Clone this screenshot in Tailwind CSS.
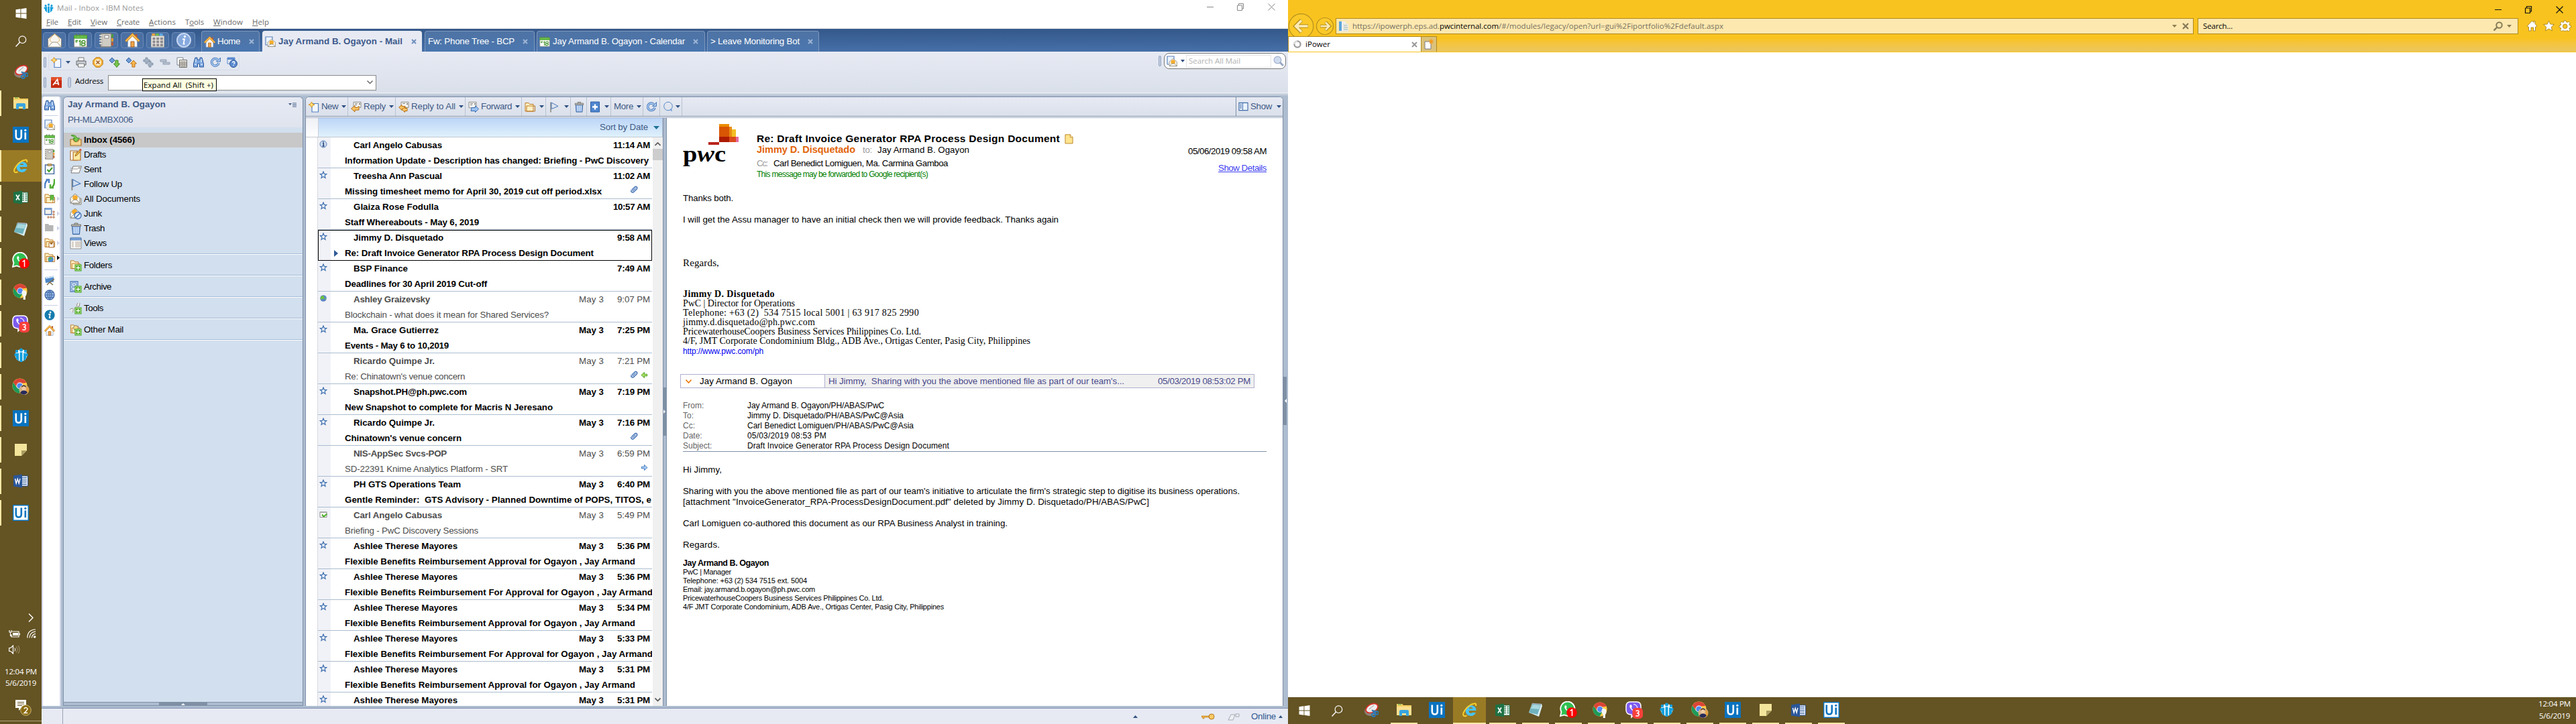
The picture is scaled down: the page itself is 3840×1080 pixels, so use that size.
<!DOCTYPE html>
<html lang="en">
<head>
<meta charset="utf-8">
<title>Mail - Inbox - IBM Notes</title>
<script src="https://cdn.jsdelivr.net/npm/@tailwindcss/browser@4"></script>
</head>
<body class="w-[3840px] h-[1080px] overflow-hidden bg-white font-['Liberation_Sans',Arial,sans-serif] text-[13.3px] text-black [&_[data-w]]:inline-block [&_[data-w]]:whitespace-pre [&_[data-w]]:shrink-0">

<svg class="hidden">
  <defs>
    <linearGradient id="gOrange" x1="0" y1="0" x2="0" y2="1"><stop offset="0" stop-color="#ffe08a"/><stop offset="1" stop-color="#f09a1c"/></linearGradient>
    <linearGradient id="gBlue" x1="0" y1="0" x2="1" y2="1"><stop offset="0" stop-color="#eaf4ff"/><stop offset="1" stop-color="#6d9fd8"/></linearGradient>
    <symbol id="win" viewBox="0 0 16 16"><path fill="#fff" d="M0 2.3 7 1.3V7.6H0zM7.9 1.2 16 0v7.6H7.900zM0 8.400h7v6.300l-7-1zM7.900 8.400H16V16l-8.100-1.200z"/></symbol>
    <symbol id="find" viewBox="0 0 16 16"><circle cx="9.800" cy="5.800" r="5" fill="none" stroke="#fff" stroke-width="1.100"/><path d="M6.200 9.500 0.500 15.500" stroke="#fff" stroke-width="1.300"/></symbol>
    <symbol id="snip" viewBox="0 0 22 22"><ellipse cx="10" cy="13" rx="9" ry="7" fill="#8d8478"/><ellipse cx="12" cy="8.500" rx="9.500" ry="6" fill="#eee" stroke="#d8322b" stroke-width="1.800" transform="rotate(-28 12 8.500)"/><path d="M8 10 15 4M12 11l5 1" stroke="#999" stroke-width="1"/><g fill="none" stroke="#2a7ab8" stroke-width="1.800"><circle cx="14.500" cy="18.500" r="2.500"/><circle cx="19.500" cy="15.500" r="2.300"/></g><path d="M12 11l4.500 5M18 13l-6-1" stroke="#2a7ab8" stroke-width="1.400"/></symbol>
    <symbol id="explorer" viewBox="0 0 22 20"><path d="M0 1h8l2 2h12v15H0z" fill="#f6cf60"/><path d="M0 5h22v13H0z" fill="#fbe08e"/><path d="M4 19v-7q0-2 2-2h10q2 0 2 2v7h-4v-4H8v4z" fill="#39a5e0"/><path d="M2 2h5" stroke="#3fae5a"/></symbol>
    <symbol id="ui" viewBox="0 0 24 24"><path fill="#0a73c0" d="M0 0h24v24H0z"/><path d="M4.800 4.500V14q0 4.500 4 4.500t4-4.500V4.500M18.800 8.500v10.500" fill="none" stroke="#fff" stroke-width="2.600"/><circle cx="18.800" cy="5.300" r="1.600" fill="#fff"/></symbol>
    <symbol id="uiw" viewBox="0 0 24 24"><path fill="#fff" stroke="#0a73c0" stroke-width="1.500" d="M.7.700h22.600v22.600H.7z"/><path d="M4.800 4.500V14q0 4.500 4 4.500t4-4.500V4.500M18.800 8.500v10.500" fill="none" stroke="#0a73c0" stroke-width="2.600"/><circle cx="18.800" cy="5.300" r="1.600" fill="#0a73c0"/></symbol>
    <symbol id="ie" viewBox="0 0 24 24"><path d="M6.500 13H21.500Q21.500 5.500 13.500 5 6 5.500 5.500 13 6 20.500 13.500 21q5.500 0 7.500-5H15.500q-.5 1-2 1-3-.2-3-4zM10.500 10q.500-2 3-2t3 2z" fill="#48c4f5" fill-rule="evenodd"/><path d="M21 6Q22.500 0 14 4 6 8.500 2.500 16.500 1 23 7.500 20.500" fill="none" stroke="#f8cf2c" stroke-width="2"/></symbol>
    <symbol id="excel" viewBox="0 0 22 20"><path d="M11 2.500h10.500v15H11z" fill="#fff" stroke="#1e7245"/><path d="M13 5h3M17.500 5h3M13 8h3M17.500 8h3M13 11h3M17.500 11h3M13 14h3M17.500 14h3" stroke="#1e7245" stroke-width="1.600"/><path d="M0 2 13 0v20L0 18z" fill="#1e7245"/><path d="m4 6 5 8M9 6l-5 8" stroke="#fff" stroke-width="1.700"/></symbol>
    <symbol id="word" viewBox="0 0 22 20"><path d="M11 2.500h10.500v15H11z" fill="#fff" stroke="#2a5699"/><path d="M13 5h7M13 7.500h7M13 10h7M13 12.500h7M13 15h7" stroke="#2a5699" stroke-width="1.100"/><path d="M0 2 13 0v20L0 18z" fill="#2a5699"/><path d="m2.500 6.500 1.700 7 2-6.500 2 6.500 1.700-7" fill="none" stroke="#fff" stroke-width="1.400"/></symbol>
    <symbol id="notepad" viewBox="0 0 22 22"><path d="m6 1 14 1 1 3-5 16L1 15z" fill="#d9eef2"/><path d="m6 2 13 1-5 15-13-3z" fill="#6fb3bd"/><path d="m7 3 11 1-2 6-12-1z" fill="#a9d8de"/><path d="m6 1.500 14 1" stroke="#889" stroke-dasharray="1 1" stroke-width="2"/></symbol>
    <symbol id="whats" viewBox="0 0 26 26"><path d="M1 22 2.500 16A10.500 10.500 0 1 1 7 20.500z" fill="#2fc052" stroke="#fff" stroke-width="1.800"/><path d="M8 6.500q-2 2 1 6t7 4.500q2 0 2.500-2.500l-3-1.500-1.500 1.500q-3-1-4.500-4.300l1.200-1.200L9.500 6z" fill="#fff"/><circle cx="18" cy="17" r="7.800" fill="#f00"/><path d="m15.500 14.500 3-2v9.500" fill="none" stroke="#fff" stroke-width="1.500"/></symbol>
    <symbol id="chrome" viewBox="0 0 24 24"><circle cx="11.500" cy="11.500" r="11" fill="#ffcd42"/><path d="M1.800 6.500A11 11 0 0 1 21.500 7L11.500 8 8 14.500z" fill="#db4437"/><path d="M1.800 6.500A11 11 0 0 0 11 22.500l5-8.500L7 14z" fill="#1d9a5a"/><circle cx="11.500" cy="11.500" r="5" fill="#fff"/><circle cx="11.500" cy="11.500" r="4.100" fill="#4f8af5"/></symbol>
    <symbol id="chrome1" viewBox="0 0 26 26"><use href="#chrome" width="24" height="24"/><path d="M14 14q0-3.500 3.500-3.500t4 4q0 4-1.800 5.500V25h-3.400v-5Q14 18 14 14z" fill="#f5f5ee"/></symbol>
    <symbol id="chrome2" viewBox="0 0 26 26"><use href="#chrome" width="24" height="24"/><circle cx="18" cy="17.500" r="7.500" fill="#d3b184"/><path d="M22 12a7.500 7.500 0 0 1 1 11l-2-3z" fill="#e8a23a"/><circle cx="17.500" cy="15.500" r="3" fill="#f0c9a5"/><path d="M12 22q2-4 6-3.500t5 3q-5 6-11 .5z" fill="#262a5a"/><path d="M14.500 14q3-4 6 0v-2q-3-3-6 0z" fill="#3a2a20"/></symbol>
    <symbol id="viber" viewBox="0 0 26 26"><path d="M7 1h10q6 0 6 7v6q0 6-6 6h-4l-4 4v-4q-8 0-8-7V8q0-7 6-7z" fill="#7d5bf0" stroke="#fff" stroke-width="1.500"/><path d="M7 5.500q-2 2 1 6t6.500 4.500q2-.500 2-2.500L13.500 12 12 13.500Q9.500 12 8.800 9.500L10 8 8.500 5z" fill="#fff"/><path d="M12 4.500q5 .5 6 6" fill="none" stroke="#fff" stroke-width="1.200"/><rect x="10.500" y="10" width="15.500" height="16" rx="5" fill="#f8403a"/><path d="M15.500 14.500q4.500-1.500 4.500 1.200 0 2-2.800 2.100 3 .2 3 2.300 0 2.800-4.900 1.700" fill="none" stroke="#fff" stroke-width="1.500"/></symbol>
    <symbol id="notes" viewBox="0 0 22 22"><circle cx="11" cy="11" r="9" fill="#fff"/><g fill="#12a0dc"><circle cx="11" cy="3" r="2.500"/><circle cx="4.500" cy="5" r="2.300"/><circle cx="17.500" cy="5" r="2.300"/><path d="M9 6.500h4V21H9zM1 8.500l6.500-1V20L3 15.500V12H1zM21 8.500l-6.500-1V20L19 15.500V12h2z"/></g></symbol>
    <symbol id="sticky" viewBox="0 0 18 18"><path d="M0 0h18v10l-8 8H0z" fill="#f3e59b"/><path d="M10 10h8l-8 8z" fill="#a99d62"/></symbol>

    <symbol id="mailbig" viewBox="0 0 22 22"><path d="M1 9 11 1l10 8v12H1z" fill="#f7f5ef" stroke="#8a8577"/><path d="m4 9 3-4 4-3 4 3 3 4v3l-4 3H8l-4-3z" fill="url(#gOrange)" stroke="#d58a1a" stroke-width=".6"/><path d="m1.500 20.500 6-6.500h7l6 6.500" fill="#fbfaf6" stroke="#9a9485"/></symbol>
    <symbol id="cal" viewBox="0 0 22 22"><path d="M1 3h20v18H1z" fill="#fdfdfa" stroke="#8d8a80"/><path d="M1 3h20v4.500H1z" fill="#6ac24a" stroke="#3f9a2a"/><path d="M5 .5v4M10 .5v4M17 .5v4" stroke="#5d8a4c" stroke-width="1.500"/><path d="M3 11h4M3 13h3M8.500 12.500l2-1.500v8M15.500 15q-2.700-.5-2.700-2t2.700-2 2.700 2-2.700 2-2.900 2 2.900 2 2.900-2-2.900-2" fill="none" stroke="#3d9026" stroke-width="1.500"/></symbol>
    <symbol id="book" viewBox="0 0 22 22"><path d="M2 1h16v20H2z" fill="#b9b6ae" stroke="#75726a"/><path d="M5 2h12v18H5z" fill="#cfccc4"/><path d="M8 4h6v4H8z" fill="#fff" stroke="#888"/><path d="M0 4h4M0 8h4M0 12h4M0 16h4" stroke="#eee" stroke-width="1.500"/><path d="M18 2h3v5h-3z" fill="#4f9a3d"/><path d="M18 8h3v5h-3z" fill="#e69a2f"/><path d="M18 14h3v5h-3z" fill="#b65c3a"/></symbol>
    <symbol id="house" viewBox="0 0 22 22"><path d="M15 2h3v6h-3z" fill="#b5563a"/><path d="M4 10 11 4l7 6v11H4z" fill="#f6f8fc" stroke="#8ea2c4"/><path d="m1 12.500 10-10 10 10" fill="none" stroke="#c87a1c" stroke-width="3.600"/><path d="m1 12.500 10-10 10 10" fill="none" stroke="#fbbf52" stroke-width="2"/><path d="M8.500 13h5v8h-5z" fill="#f0a545" stroke="#a3622a"/></symbol>
    <symbol id="grid" viewBox="0 0 22 22"><path d="M2 0h5v4H2z" fill="#f3a53d"/><path d="M8 0h5v4H8z" fill="#6dbb4a"/><path d="M14 0h5v4h-5z" fill="#5da9e8"/><path d="M1 4h20v17H1z" fill="#f2efe9" stroke="#b7b2a6"/><g fill="#6d6a72"><path d="M3 6h4.500v4H3zM9 6h4.500v4H9zM15 6h4.500v4H15zM3 11h4.500v4H3zM9 11h4.500v4H9zM15 11h4.500v4H15zM3 16h4.500v4H3zM9 16h4.500v4H9zM15 16h4.500v4H15z" opacity=".75"/></g></symbol>
    <symbol id="info" viewBox="0 0 22 22"><circle cx="11" cy="11" r="10" fill="#86a9de" stroke="#c4d6f2" stroke-width="2"/><circle cx="12.500" cy="5.500" r="1.700" fill="#fff"/><path d="M9 9.500h3l-1.500 7h2" fill="none" stroke="#fff" stroke-width="1.800"/></symbol>
    <symbol id="infod" viewBox="0 0 22 22"><circle cx="11" cy="11" r="10.500" fill="#167cae"/><circle cx="12.500" cy="5.500" r="1.900" fill="#fff"/><path d="M8.500 9.500h3.500l-1.500 7h2.500" fill="none" stroke="#fff" stroke-width="2.200"/></symbol>
    <symbol id="maildoc" viewBox="0 0 16 16"><path d="M1 1h10v12H1z" fill="#eef5ff" stroke="#5b82be" stroke-width="1.200"/><path d="m4 9 5.500-4.500L15.500 9v6.500H4z" fill="#f2efe6" stroke="#9a9688" stroke-width=".8"/><circle cx="9.700" cy="9.500" r="3.200" fill="#f6ad2c"/><path d="m4 15.500 4-3.500h3.500l4 3.500z" fill="#fbfaf5" stroke="#8a8779" stroke-width=".8"/></symbol>
    <symbol id="new" viewBox="0 0 16 16"><path d="M5 3h9.500v12.500H5z" fill="#f4f8ff" stroke="#5580bd" stroke-width="1.200"/><path d="M4.500.500 6 3.500l3 1.200-3 1.200-1.500 3-1.500-3L0 4.700l3-1.200z" fill="#ffe27a" stroke="#d68b16" stroke-width=".9"/></symbol>
    <symbol id="print" viewBox="0 0 16 16"><path d="M4 1h8v5H4z" fill="#fff" stroke="#777"/><path d="M1 6h14v6H1z" fill="#c9ced6" stroke="#666"/><path d="M3.500 10h9v5h-9z" fill="#fff" stroke="#777"/></symbol>
    <symbol id="cancel" viewBox="0 0 16 16"><path d="M5 .8h6L15.200 5v6L11 15.200H5L.8 11V5z" fill="#f6b63c" stroke="#b9791a"/><circle cx="8" cy="8" r="4.800" fill="#fff3d0"/><path d="m5.500 5.500 5 5M10.500 5.500l-5 5" stroke="#a8622a" stroke-width="1.700"/></symbol>
    <symbol id="next" viewBox="0 0 16 16"><path d="M4 1 8 5 4 9 0 5z" fill="#6f9cd6" stroke="#355f9d"/><path d="M9 5h4v5h2.500L11 15.500 6.500 10H9z" fill="#7bc74d" stroke="#3f8a24"/></symbol>
    <symbol id="prev" viewBox="0 0 16 16"><path d="M4 1 8 5 4 9 0 5z" fill="#6f9cd6" stroke="#355f9d"/><path d="M9 15h4v-5h2.500L11 5 6.500 10H9z" fill="#f9b74d" stroke="#b9731b"/></symbol>
    <symbol id="plus" viewBox="0 0 16 16"><path d="M4 1h3v3h3v3H7v3H4V7H1V4h3zM9 6h3v3h3v3h-3v3H9v-3H7" fill="#a4b2c4" stroke="#7a8aa0" stroke-width=".8"/></symbol>
    <symbol id="minus" viewBox="0 0 16 16"><path d="M1 4h9v3H1zM5 8h10v3H5z" fill="#b8c2d0" stroke="#8896aa" stroke-width=".8"/></symbol>
    <symbol id="table" viewBox="0 0 16 16"><path d="M1 1h9v11H1z" fill="#fff" stroke="#7f8690"/><path d="M4.500 4.500h11v11h-11z" fill="#f7f5ee" stroke="#6e6c66"/><path d="M6 7h8v7H6zM8.700 7v7M11.400 7v7M6 9.300h8M6 11.600h8" fill="none" stroke="#6e6c66" stroke-width=".8"/></symbol>
    <symbol id="bino" viewBox="0 0 16 16"><path d="M3 1h3v3h4V1h3l2.500 9v5h-6v-5h-3v5h-6v-5z" fill="#7aa5df" stroke="#2e5a9c"/><path d="M2 11h3M11 11h3M4 3v5M12 3v5" stroke="#d9e8fa" stroke-width="1.400"/></symbol>
    <symbol id="redo" viewBox="0 0 16 16"><path d="M13 9a5.300 5.300 0 1 1-1.500-5" fill="none" stroke="#3c6db0" stroke-width="3.400"/><path d="M13 9a5.300 5.300 0 1 1-1.500-5" fill="none" stroke="#a9cbf3" stroke-width="1.800"/><path d="M15.500 1v6h-6z" fill="#a9cbf3" stroke="#3c6db0" stroke-width=".9"/></symbol>
    <symbol id="help" viewBox="0 0 16 16"><path d="M1 1h11v3H1z" fill="#5b8bd0"/><path d="M1 1h11v9H1z" fill="none" stroke="#5b8bd0"/><circle cx="10" cy="10" r="5.500" fill="#5b8bd0" stroke="#2f5a98"/><path d="M8.300 8.500q.3-1.500 1.900-1.500t1.600 1.500-1.700 2M10 12v1.200" fill="none" stroke="#fff" stroke-width="1.300"/></symbol>
    <symbol id="acro" viewBox="0 0 16 16"><path d="M0 0h16v16H0z" fill="#c62a10"/><path d="M0 0h16v5H0z" fill="#e2502a"/><path d="M3 12 9.500 3.500 11.500 12M5.500 9.500h6" fill="none" stroke="#fff" stroke-width="1.700"/></symbol>
    <symbol id="mag" viewBox="0 0 16 16"><circle cx="6.500" cy="6.500" r="5.300" fill="#cfdcf0" stroke="#a9b8d0" stroke-width="1.400"/><path d="m10 10 5 5" stroke="#9aa9c2" stroke-width="3"/></symbol>
    <symbol id="todo" viewBox="0 0 16 16"><path d="M1.500 2h13v13.500h-13z" fill="#fff" stroke="#466ba0" stroke-width="1.500"/><path d="M5 .5h6v3H5z" fill="#c9a96a" stroke="#8d6c33" stroke-width=".7"/><path d="m4.500 9 2.500 3 5-6" fill="none" stroke="#3c9a28" stroke-width="2"/></symbol>
    <symbol id="sync" viewBox="0 0 16 16"><path d="M1 15Q0 6 5 2M2.500 2H7v5" fill="none" stroke="#4f81c4" stroke-width="2.600"/><path d="M15 1q1 9-4 13M14 14H9V9" fill="none" stroke="#51ad34" stroke-width="2.600"/></symbol>
    <symbol id="folder" viewBox="0 0 16 16"><path d="M1 14.500V2h5l1.500 2H13v10.500z" fill="#fff0c4" stroke="#bd7a26"/><path d="M3 14.500V6.500h12.500v8z" fill="url(#gOrange)" stroke="#bd7a26"/></symbol>
    <symbol id="foldmark" viewBox="0 0 16 16"><use href="#folder" width="16" height="16"/><path d="M9 3h5v8l-2.500-2L9 11z" fill="#64bb3f" stroke="#3a8a24" stroke-width=".7"/></symbol>
    <symbol id="folddisk" viewBox="0 0 16 16"><use href="#folder" width="16" height="16"/><path d="M7 8h7v7H7z" fill="#fff" stroke="#a4641e"/><path d="M9 8h3v2.500H9z" fill="#a4641e"/></symbol>
    <symbol id="foldglobe" viewBox="0 0 16 16"><use href="#folder" width="16" height="16"/><circle cx="9.500" cy="11" r="4" fill="#4e8fd4"/><path d="M7 9q3-2 4 0t-2 2-1 3q-3-2-1-5z" fill="#5cb846"/></symbol>
    <symbol id="foldgray" viewBox="0 0 16 16"><path d="M1 13V2h5l1.500 2H13.500v9z" fill="#b5b5b5"/></symbol>
    <symbol id="tree" viewBox="0 0 16 16"><path d="M.8 1h10v9H.8z" fill="#f3f1ec" stroke="#4f76ae" stroke-width="1.300"/><path d="M2 1h9v2H2z" fill="#7ba6e0"/><path d="M13 5h2v2h-2zM13 9h2v2h-2zM5 13h2v2H5zM9 13h2v2H9zM13 13h2v2h-2z" fill="none" stroke="#b5714a"/></symbol>
    <symbol id="desk" viewBox="0 0 16 16"><path d="m1 4 13-2.500v9L2 12z" fill="#4c87c7"/><path d="m2 5 12-2.500" stroke="#cfe3f8" stroke-width="2"/><path d="m4 15 4-4 5 4M7 12l8-6" fill="none" stroke="#7b6a46" stroke-width="1.500"/></symbol>
    <symbol id="globe" viewBox="0 0 16 16"><circle cx="8" cy="8" r="7" fill="#9dbbe6" stroke="#3f69a8" stroke-width="1.300"/><path d="M1 8h14M8 1v14M2.500 4.500h11M2.500 11.500h11M8 1Q1.500 8 8 15 14.500 8 8 1" fill="none" stroke="#3f69a8"/></symbol>
    <symbol id="inbox" viewBox="0 0 18 18"><path d="M1 8h4l2 3h5l2-3h3v9H1z" fill="#f6d68f" stroke="#a9702a" stroke-width="1.200"/><path d="M2 2q6-2 9 4h3.500L9 12 5 6.500h3Q6 3 2 2z" fill="#7cca4c" stroke="#3c8f25"/></symbol>
    <symbol id="draft" viewBox="0 0 18 18"><path d="M1 3h10v14H1z" fill="#fff" stroke="#b2702b" stroke-width="1.200"/><path d="M5 5h11v12H5z" fill="#ffe9a0" stroke="#b2702b" stroke-width="1.200"/><path d="m8 11 1-3 6-7 2 1.500-6 7z" fill="#f2b23a" stroke="#7d5a2a" stroke-width=".8"/><circle cx="16" cy="1.500" r="1.400" fill="#d5534a"/></symbol>
    <symbol id="sent" viewBox="0 0 18 18"><path d="M5 4h12.500L14 14H2z" fill="#fafafa" stroke="#7f7d76"/><path d="M1 7h4M0 10h4M5 8h7" stroke="#999"/><path d="M13 5.500h3l-.8 2h-3z" fill="#999"/></symbol>
    <symbol id="flag" viewBox="0 0 16 16"><path d="M3 1v15" stroke="#8a8a86" stroke-width="1.600"/><path d="M4 1.500 14 7 4 11z" fill="url(#gBlue)" stroke="#4677b8"/></symbol>
    <symbol id="alldoc" viewBox="0 0 18 18"><path d="M5 8h12v9H5z" fill="#e8e6df" stroke="#88857a"/><path d="M1 7.500 8 1l7 6.500V15H1z" fill="#faf8f2" stroke="#88857a"/><circle cx="8" cy="7" r="3.800" fill="#f6ab2c"/><path d="m1 15 5-5h4l5 5z" fill="#fcfbf7" stroke="#88857a"/></symbol>
    <symbol id="junk" viewBox="0 0 18 18"><path d="M1 7.500 8 1l7 6.500V15H1z" fill="#faf8f2" stroke="#88857a"/><circle cx="7" cy="6" r="3.800" fill="#f6ab2c"/><path d="m1 15 5-5h4l5 5z" fill="#fcfbf7" stroke="#88857a"/><circle cx="12" cy="11.500" r="5" fill="#d9e7fa" stroke="#4a78b8" stroke-width="1.400"/><path d="m8.500 15 7-7" stroke="#4a78b8" stroke-width="1.400"/></symbol>
    <symbol id="trash" viewBox="0 0 18 18"><path d="M3.500 5h12l-1 12.500H4.500z" fill="#8db2e4" stroke="#38629c"/><path d="M6.500 7v9M9.500 7v9M12.500 7v9" stroke="#dceafc" stroke-width="1.400"/><path d="M2.500 3h14v2.300h-14zM7 3V1h5v2" fill="#c9c9c4" stroke="#72716b"/></symbol>
    <symbol id="views" viewBox="0 0 18 18"><path d="M1 1h16v16H1z" fill="#fff" stroke="#8b8a85"/><path d="M1 1h16v3H1z" fill="#7faae3" stroke="#4c78b5"/><path d="M3 6h3v9H3zM8 6h8v9H8z" fill="#d9d3c9"/></symbol>
    <symbol id="addp" viewBox="0 0 12 12"><path d="M.5.500h11v11H.5z" fill="#49a51c"/><path d="M2 2h8v8H2z" fill="none" stroke="#b6e39a" stroke-width="1"/><path d="M6 3v6M3 6h6" stroke="#fff" stroke-width="1.400"/></symbol>
    <symbol id="nfold" viewBox="0 0 18 18"><use href="#folder" width="16" height="15"/><use href="#addp" x="7" y="7" width="11" height="11"/></symbol>
    <symbol id="narch" viewBox="0 0 18 18"><path d="M1 1h11v15H1z" fill="#e3eefc" stroke="#4f7dbd" stroke-width="1.300"/><path d="M3 3h7v5H3zM3 10h7v4H3zM5 5.500h3" fill="none" stroke="#4f7dbd"/><use href="#addp" x="7" y="7" width="11" height="11"/></symbol>
    <symbol id="ntool" viewBox="0 0 18 18"><path d="M0 11q4-4 6 0l-2 4M12 1q-3 3-1 6l3-1 1-5" fill="#f0f0ec" stroke="#8a8a84"/><path d="m4 13 8-8" stroke="#c4c4be" stroke-width="2.500"/><use href="#addp" x="7" y="7" width="11" height="11"/></symbol>
    <symbol id="nother" viewBox="0 0 18 18"><use href="#folder" width="16" height="15"/><circle cx="9" cy="6" r="3.500" fill="#ffd77a" stroke="#88857a"/><use href="#addp" x="7" y="7" width="11" height="11"/></symbol>
    <symbol id="reply" viewBox="0 0 16 16"><path d="M4 .8h11v8H4z" fill="#f6f6f3" stroke="#8c8a84"/><path d="M6 3h4M6 5h3" stroke="#888"/><path d="M12 2.500h2v2h-2z" fill="#888"/><path d="M.6 10.500 6 6v2.800h4l2-2v5.800H6v2.800z" fill="#fbc363" stroke="#b56f16"/></symbol>
    <symbol id="replyall" viewBox="0 0 16 16"><path d="M4 .8h11v8H4z" fill="#f6f6f3" stroke="#8c8a84"/><path d="M6 3h4" stroke="#888"/><path d="M12 2.500h2v2h-2z" fill="#888"/><path d="M.6 8.500 5 5v2h5v4H5v2z" fill="#fbc363" stroke="#b56f16"/><path d="M5 11.800 9.500 8v2H13v4H9.500v2z" fill="#fbc363" stroke="#b56f16"/></symbol>
    <symbol id="fwd" viewBox="0 0 16 16"><path d="M1 .8h11v8.500H1z" fill="#f6f6f3" stroke="#8c8a84"/><path d="M3 3h4M3 5h3" stroke="#888"/><path d="M9 2.500h2v2H9z" fill="#888"/><path d="m15.500 11-5-5v3H5l-1 5h6.500v2z" fill="#9cc3f2" stroke="#3d6cae"/></symbol>
    <symbol id="addb" viewBox="0 0 16 16"><path d="M1.500.500h13v15h-13z" fill="#4f86d0" stroke="#2f5f9f"/><path d="M8 4v8M4 8h8" stroke="#fff" stroke-width="2.400"/></symbol>
    <symbol id="bubble" viewBox="0 0 16 16"><circle cx="8" cy="7" r="6.300" fill="url(#gBlue)" stroke="#5b8ac8"/><path d="m10 12 4 3-1-4.500z" fill="#6c9bd6"/></symbol>
    <symbol id="show" viewBox="0 0 16 16"><path d="M1 2h14v12H1z" fill="#e9f2fe" stroke="#3f6ba8" stroke-width="1.200"/><path d="M7 2v12" stroke="#3f6ba8"/><path d="M2.500 4.500h3M2.500 6.500h3M2.500 8.500h3M2.500 10.500h3" stroke="#3f6ba8"/></symbol>
    <symbol id="star" viewBox="0 0 12 12"><path d="m6 1 1.300 3.300 3.500.2L8.100 6.800 9 10.500 6 8.500l-3 2 .9-3.700L1.200 4.500l3.500-.2z" fill="#f2f7fd" stroke="#3f6faf" stroke-width="1.200"/></symbol>
    <symbol id="i" viewBox="0 0 12 12"><circle cx="6" cy="6" r="5" fill="#c9dbf2" stroke="#5d80b4"/><path d="M6 2.200v1.600M5 5h1.300v3.500M4.500 9h3" fill="none" stroke="#23406e" stroke-width="1.400"/></symbol>
    <symbol id="earth" viewBox="0 0 12 12"><circle cx="6" cy="6" r="4.800" fill="#5b86c6"/><path d="M2 4q4-4 5 0T5 7 3 9Q1 7 2 4zM8 5q3 1 1 4z" fill="#6cc33e"/></symbol>
    <symbol id="accept" viewBox="0 0 12 12"><path d="M1 2.500h10v8H1z" fill="#fff" stroke="#8a8a8a"/><path d="M1 2h10v2H1z" fill="#aaa"/><path d="m4 6.500 2.500 3 5-4" fill="none" stroke="#53b02b" stroke-width="2.200"/></symbol>
    <symbol id="clip" viewBox="0 0 12 12"><path d="M2.500 6.500 7 2q2-1.500 3.300 0t0 3L5.500 9.800Q4 11 2.500 9.600T2 6.800" fill="#b8cdea" stroke="#4a76b4" stroke-width="1.300"/><path d="m4 8 4-4" stroke="#4a76b4"/></symbol>
    <symbol id="gleft" viewBox="0 0 12 12"><path d="m1 6 5-4.500V4.500h4.500v3H6v3z" fill="#a8e063" stroke="#4a9a1e"/></symbol>
    <symbol id="bright" viewBox="0 0 12 12"><path d="m11 6-5-4.500V4.500H1.500v3H6v3z" fill="#a9cdf6" stroke="#3f76bc"/></symbol>
    <symbol id="doc" viewBox="0 0 14 16"><path d="M1 .8h8L13 5v10H1z" fill="#ffe48f" stroke="#b88324"/><path d="M9 .8V5h4" fill="#fff6d3" stroke="#b88324"/></symbol>
    <symbol id="spark" viewBox="0 0 14 16"><path d="M1 4h9v11H1z" fill="#fdfdfd" stroke="#7b7b85"/><path d="M10.500 0v8M7 4h7M8 1.500l5 5M13 1.500l-5 5" stroke="#f49b1c" stroke-width="1.200"/></symbol>
  </defs>
</svg>

<div class="flex w-[3840px] h-[1080px]">

  <!-- vertical taskbar -->
  <nav class="w-[62px] h-full bg-[#645323] flex flex-col shrink-0 text-white">
    <div class="h-[40px] flex items-center justify-center"><svg class="w-[17px] h-[16px]"><use href="#win"/></svg></div>
    <div class="h-[43px] flex items-center justify-center"><svg class="w-[17px] h-[17px]"><use href="#find"/></svg></div>
    <div id="sideApps" class="flex flex-col"></div>
    <div class="grow"></div>
    <div class="flex justify-end pr-[12px] h-[14px] items-center"><svg class="w-[8px] h-[13px]" viewBox="0 0 8 13"><path d="m1 .5 6 6-6 6" fill="none" stroke="#fff" stroke-width="1.400"/></svg></div>
    <div class="flex mt-[9px] pl-[13px] gap-[10px] h-[16px] items-center">
      <svg class="w-[17px] h-[13px]" viewBox="0 0 17 13"><path d="M5 3h10v8H4V7M16.500 5.500v3M1 1v3h3V1M2.500 4v5.500H5" fill="none" stroke="#fff" stroke-width="1.200"/><path d="M6 5h8v4H6z" fill="#fff"/></svg>
      <svg class="w-[14px] h-[14px]" viewBox="0 0 14 14"><g fill="none" stroke="#fff" stroke-width="1.200"><path d="M.8 13.500Q1 1.500 13 1"/><path d="M4 13.500Q4.500 5 13 4.200"/><path d="M7.300 13.500Q8 8 13 7.400"/></g><circle cx="11.700" cy="12" r="1.800" fill="#fff"/></svg>
    </div>
    <div class="flex mt-[8px] pl-[13px] h-[16px] items-center"><svg class="w-[17px] h-[14px]" viewBox="0 0 17 14"><path d="M.7 4.500v5H3L6.500 13V1L3 4.500z" fill="none" stroke="#fff" stroke-width="1.200"/><path d="M9 4.500q1.500 2.500 0 5" stroke="#fff" fill="none"/><path d="M11.500 2.500q3 4.500 0 9M14 1q4 6 0 12" stroke="#a3966f" fill="none"/></svg></div>
    <div class="mt-[16px] h-[17px] flex justify-center items-center font-['Open_Sans',sans-serif] text-[11.5px]"><span data-w="48">12:04 PM</span></div>
    <div class="h-[17px] flex justify-center items-center font-['Open_Sans',sans-serif] text-[11.5px]"><span data-w="46">5/6/2019</span></div>
    <div class="mt-[16px] h-[32px] pl-[23px]"><svg class="w-[26px] h-[26px]" viewBox="0 0 26 26"><path d="M0 1h16v12H9l-4 4v-4H0z" fill="#fff"/><path d="M3 4.500h10M3 7h10M3 9.500h7" stroke="#645323" stroke-width="1.200"/><circle cx="15.500" cy="16.500" r="7.800" fill="#8a6a10" stroke="#cbb878"/><path d="M13 14.500q.5-2 2.500-2t2.500 2q0 1.500-4.800 6h5" fill="none" stroke="#fff" stroke-width="1.500"/></svg></div>
    <div class="h-px bg-[#b3a67c] mb-[4px]"></div>
  </nav>

  <!-- IBM Notes -->
  <main class="w-[1858px] h-full flex flex-col shrink-0 bg-[#adbccf]">
    <header class="h-[43px] bg-white border-b-2 border-[#f0f0f0] font-['Open_Sans','Segoe_UI',sans-serif] text-[11.5px] relative">
      <div class="flex items-center h-[24px] pl-[3px] text-[#999]"><svg class="w-[15px] h-[15px] mr-[5px]"><use href="#notes"/></svg><span data-w="129">Mail - Inbox - IBM Notes</span>
        <div class="grow"></div>
        <svg class="w-[104px] h-[14px] mr-[18px] mt-[-4px]" viewBox="0 0 104 14"><path d="M1 7.500h10M46.500 5h7v7.500h-7zM48.500 5V2.500h7V10h-2M92.500 2.500l10 10M102.500 2.500l-10 10" fill="none" stroke="#888"/></svg>
      </div>
      <div class="flex items-center h-[17px] pl-[7px] text-[#6b6b6b]">
        <span class="mr-[14px]" data-w="18"><u>F</u>ile</span><span class="mr-[14px]" data-w="20"><u>E</u>dit</span><span class="mr-[14px]" data-w="25"><u>V</u>iew</span><span class="mr-[14px]" data-w="34"><u>C</u>reate</span><span class="mr-[14px]" data-w="40"><u>A</u>ctions</span><span class="mr-[14px]" data-w="28">T<u>o</u>ols</span><span class="mr-[14px]" data-w="44"><u>W</u>indow</span><span data-w="25"><u>H</u>elp</span>
      </div>
    </header>

    <div class="h-[34px] shrink-0 bg-linear-to-b from-[#34588a] to-[#4670a9] flex items-end pl-[2px] text-white">
      <div class="flex gap-[4px] h-[29px] items-start">
        <span class="w-[34px] h-[24px] rounded-sm border border-[#6b8bb8] bg-[#4b70a4] flex items-center justify-center"><svg class="w-[23px] h-[22px]"><use href="#mailbig"/></svg></span>
        <span class="w-[35px] h-[24px] rounded-sm border border-[#6b8bb8] bg-[#4b70a4] flex items-center justify-center"><svg class="w-[22px] h-[21px]"><use href="#cal"/></svg></span>
        <span class="w-[35px] h-[24px] rounded-sm border border-[#6b8bb8] bg-[#4b70a4] flex items-center justify-center"><svg class="w-[24px] h-[22px]"><use href="#book"/></svg></span>
        <span class="w-[34px] h-[24px] rounded-sm border border-[#6b8bb8] bg-[#4b70a4] flex items-center justify-center"><svg class="w-[23px] h-[22px]"><use href="#house"/></svg></span>
        <span class="w-[34px] h-[24px] rounded-sm border border-[#6b8bb8] bg-[#4b70a4] flex items-center justify-center"><svg class="w-[22px] h-[21px]"><use href="#grid"/></svg></span>
        <span class="w-[35px] h-[24px] rounded-sm border border-[#6b8bb8] bg-[#4b70a4] flex items-center justify-center"><svg class="w-[22px] h-[22px]"><use href="#info"/></svg></span>
      </div>
      <div class="ml-[9px] w-[87px] h-[31px] flex items-center pl-[3px] rounded-t border border-b-0 border-[#7d97bd] bg-linear-to-b from-[#4f73a4] to-[#4a77b0]"><svg class="w-[17px] h-[17px] mr-[3px]"><use href="#house"/></svg><span data-w="34">Home</span><svg class="w-[8px] h-[8px] ml-[13px]" viewBox="0 0 8 8"><path d="m1 1 6 6M7 1 1 7" stroke="#9db5d6" stroke-width="2"/></svg></div>
      <div class="ml-[4px] w-[238px] h-[31px] flex items-center pl-[4px] rounded-t bg-[#e7eaf3] text-[#3d5a8c] font-bold"><svg class="w-[16px] h-[16px] mr-[4px]"><use href="#maildoc"/></svg><span data-w="185">Jay Armand B. Ogayon - Mail</span><svg class="w-[8px] h-[8px] ml-[13px]" viewBox="0 0 8 8"><path d="m1 1 6 6M7 1 1 7" stroke="#6f8fbd" stroke-width="2"/></svg></div>
      <div class="ml-[4px] w-[164px] h-[31px] flex items-center pl-[4px] rounded-t border border-b-0 border-[#7d97bd] bg-linear-to-b from-[#4f73a4] to-[#4a77b0]"><span data-w="129">Fw: Phone Tree - BCP</span><svg class="w-[8px] h-[8px] ml-[12px]" viewBox="0 0 8 8"><path d="m1 1 6 6M7 1 1 7" stroke="#9db5d6" stroke-width="2"/></svg></div>
      <div class="ml-[3px] w-[251px] h-[31px] flex items-center pl-[3px] rounded-t border border-b-0 border-[#7d97bd] bg-linear-to-b from-[#4f73a4] to-[#4a77b0]"><svg class="w-[16px] h-[16px] mr-[4px]"><use href="#cal"/></svg><span data-w="197">Jay Armand B. Ogayon - Calendar</span><svg class="w-[8px] h-[8px] ml-[12px]" viewBox="0 0 8 8"><path d="m1 1 6 6M7 1 1 7" stroke="#9db5d6" stroke-width="2"/></svg></div>
      <div class="ml-[3px] w-[167px] h-[31px] flex items-center pl-[4px] rounded-t border border-b-0 border-[#7d97bd] bg-linear-to-b from-[#4f73a4] to-[#4a77b0]"><span data-w="133">&gt; Leave Monitoring Bot</span><svg class="w-[8px] h-[8px] ml-[12px]" viewBox="0 0 8 8"><path d="m1 1 6 6M7 1 1 7" stroke="#9db5d6" stroke-width="2"/></svg></div>
    </div>

    <div class="h-[61px] shrink-0 bg-linear-to-b from-[#e7eaf3] to-[#dae0ea] flex justify-between">
      <div>
        <div class="flex items-center h-[31px] pl-[3px]">
          <span class="w-[4px] h-[16px] rounded-full border border-[#95a5c2] bg-[#c3cee0]"></span>
          <div class="ml-[3px] w-[285px] h-[25px] rounded border border-[#d5dbe7] bg-[#e2e7f0] flex items-center pl-[3px]">
            <svg class="w-[16px] h-[16px]"><use href="#new"/></svg><svg class="w-[7px] h-[4px] ml-[6px] mr-[8px]"><path d="M0 0h7L3.500 4z" fill="#2f4f82"/></svg>
            <div class="flex gap-[9px]"><svg class="w-[16px] h-[16px]"><use href="#print"/></svg><svg class="w-[16px] h-[16px]"><use href="#cancel"/></svg><svg class="w-[16px] h-[16px]"><use href="#next"/></svg><svg class="w-[16px] h-[16px]"><use href="#prev"/></svg><svg class="w-[16px] h-[16px]"><use href="#plus"/></svg><svg class="w-[16px] h-[16px]"><use href="#minus"/></svg><svg class="w-[16px] h-[16px]"><use href="#table"/></svg><svg class="w-[16px] h-[16px]"><use href="#bino"/></svg><svg class="w-[16px] h-[16px]"><use href="#redo"/></svg><svg class="w-[16px] h-[16px]"><use href="#help"/></svg></div>
          </div>
        </div>
        <div class="flex items-center h-[30px] pl-[3px] relative font-['Open_Sans','Segoe_UI',sans-serif] text-[11.5px]">
          <span class="w-[4px] h-[16px] rounded-full border border-[#95a5c2] bg-[#c3cee0]"></span>
          <svg class="w-[16px] h-[16px] ml-[7px]"><use href="#acro"/></svg>
          <span class="ml-[9px] w-[5px] h-[16px] rounded-full border border-[#95a5c2] bg-[#c3cee0]"></span>
          <span class="ml-[6px] mb-[4px]" data-w="42">Address</span>
          <div class="ml-[7px] w-[400px] h-[23px] bg-white border border-[#8a8a8a] flex items-center justify-end pr-[4px]"><svg class="w-[9px] h-[6px]"><path d="m.5.500 4 4 4-4" fill="none" stroke="#555" stroke-width="1.200"/></svg></div>
          <div class="absolute left-[150px] top-[9px] w-[111px] h-[19px] bg-[#ffffe1] border border-black flex items-center pl-[1px]"><span data-w="104">Expand All  (Shift +)</span></div>
        </div>
      </div>
      <div class="flex items-center h-[28px] pr-[3px] font-['Open_Sans','Segoe_UI',sans-serif] text-[11.5px]">
        <span class="w-[4px] h-[16px] rounded-full border border-[#95a5c2] bg-[#c3cee0]"></span>
        <div class="ml-[4px] w-[182px] h-[24px] rounded-lg border border-[#777] bg-white flex items-center pl-[3px]"><svg class="w-[16px] h-[16px]"><use href="#maildoc"/></svg><svg class="w-[6px] h-[4px] ml-[5px] mr-[2px]"><path d="M0 0h6L3 4z" fill="#2f4f82"/></svg><div class="w-[127px] h-[19px] border border-[#e5e5e5] flex items-center pl-[3px] text-[#b2b2b2]"><span data-w="77">Search All Mail</span></div><svg class="w-[16px] h-[16px] ml-[3px]"><use href="#mag"/></svg></div>
      </div>
    </div>
    <div class="h-[5px] shrink-0 border-t border-[#eef1f6] bg-linear-to-b from-[#d3dae5] to-[#b4c1d2]"></div>

    <div class="flex h-[910px] shrink-0">
      <!-- icon strip -->
      <aside class="w-[29px] mt-[1px] bg-white border-x-2 border-[#d4d8ec] rounded-t flex flex-col pl-[2px] text-[0px]">
        <div id="strip" class="flex flex-col"></div>
      </aside>

      <!-- folders -->
      <section class="ml-[3px] w-[358px] mt-[1px] border border-b-0 border-[#7f90a8] rounded-t-md bg-[#d2dfee] flex flex-col overflow-hidden">
        <div class="h-[45px] bg-linear-to-b from-[#e7eaf3] to-[#dfe4ee] px-[6px] text-[#3f5a86]">
          <div class="h-[22px] flex items-center justify-between"><b data-w="146">Jay Armand B. Ogayon</b><svg class="w-[12px] h-[7px] mr-[3px]" viewBox="0 0 12 7"><path d="M0 1h5L2.500 4zM6 .5h6v1H6zM6 3h6v1H6zM6 5.500h6v1H6z" fill="#3f5a86"/></svg></div>
          <div class="h-[23px] flex items-center"><span data-w="97">PH-MLAMBX006</span></div>
        </div>
        <div id="folders" class="pt-[8px] flex flex-col"></div>
        <div class="grow"></div>
        <div class="h-[6px] border-y border-[#7f90a8] bg-[#adbccf] flex justify-center"><span class="w-[72px] bg-[#7f90a4] flex items-center justify-center"><svg class="w-[6px] h-[3px]"><path d="M0 3h6L3 0z" fill="#fff"/></svg></span></div>
      </section>

      <!-- mail -->
      <section class="ml-[3px] w-[1458px] mt-[1px] border border-[#7f90a8] border-b-0 rounded-t-md bg-white flex flex-col overflow-hidden">
        <div class="h-[31px] shrink-0 bg-white border-b border-[#a5b1c4]"><div class="h-[29px] bg-linear-to-b from-[#e7eaf3] to-[#dae0ea] border-b border-[#7f90a8] flex items-center text-[#3f5a86]" id="actions"></div></div>
        <div class="flex grow min-h-0">
          <!-- list -->
          <div class="w-[532px] shrink-0 flex flex-col overflow-hidden">
            <div class="h-[29px] shrink-0 flex border-b border-[#c3c8d0]">
              <div class="w-[19px] bg-linear-to-b from-[#eef0f5] to-white border-r border-[#c9ced8]"></div>
              <div class="grow bg-linear-to-b from-[#bcd5f7] to-[#dff1fc] border-r border-[#b8c4d4] flex items-center justify-end text-[#3f5a86] pr-[4px]"><span data-w="72">Sort by Date</span><svg class="w-[9px] h-[5px] ml-[8px]"><path d="M0 0h9L4.500 5z" fill="#1f7298"/></svg></div>
            </div>
            <div class="flex grow min-h-0 pl-[17px]">
              <div id="mails" class="w-[499px] border-l border-[#d6d9e0] overflow-hidden"></div>
              <div class="w-[15px] bg-[#f0f0f0] ml-[1px] flex flex-col items-center">
                <svg class="w-[9px] h-[6px] mt-[7px] mb-[4px] shrink-0"><path d="m.5 5 4-4 4 4" fill="none" stroke="#555" stroke-width="1.600"/></svg>
                <div class="w-full h-[17px] bg-[#cdcdcd]"></div>
                <div class="grow"></div>
                <svg class="w-[9px] h-[6px] mb-[6px] shrink-0"><path d="m.5.500 4 4 4-4" fill="none" stroke="#555" stroke-width="1.600"/></svg>
              </div>
            </div>
          </div>
          <div class="w-[6px] shrink-0 bg-[#adbccf] border-x border-[#7f90a8] flex items-start"><div class="mt-[402px] w-[4px] h-[72px] bg-[#7f90a4] flex items-center"><svg class="w-[3px] h-[6px]"><path d="M0 0v6l3-3z" fill="#fff"/></svg></div></div>

          <!-- message -->
          <article class="pl-[24px] w-[918px] overflow-hidden">
            <div class="h-[112px] flex pt-[9px]">
              <svg class="w-[110px] h-[72px] shrink-0" viewBox="0 0 110 72"><path d="M38 27h16v4H38z" fill="#b9231a"/><path d="M54 0h15v27H54z" fill="#d85604"/><path d="M54 0h15v4H54z" fill="#eb8c00"/><path d="M69 8h10v18H69z" fill="#f3be26"/><path d="M69 4h4v16h-4z" fill="#e88d14"/><path d="M54 19h15v8H54z" fill="#ad1b02"/><path d="M69 19h10v8H69z" fill="#dc4a1e"/><path d="M79 19h4v8h-4z" fill="#e669a2"/><text x="0" y="56" font-family="Liberation Serif, serif" font-weight="700" font-size="33" textLength="64" lengthAdjust="spacingAndGlyphs">p<tspan font-style="italic">w</tspan>c</text></svg>
              <div class="pt-[13px] grow">
                <div class="h-[18px] flex items-center text-[15.5px] font-bold"><span data-w="452">Re: Draft Invoice Generator RPA Process Design Document</span><svg class="w-[13px] h-[15px] ml-[7px]"><use href="#doc"/></svg></div>
                <div class="h-[16px] flex items-center"><b class="text-[#e2640a] text-[14.5px]" data-w="147">Jimmy D. Disquetado</b><span class="ml-[11px] text-[#9a9a9a]" data-w="14">to:</span><span class="ml-[8px]" data-w="137">Jay Armand B. Ogayon</span></div>
                <div class="h-[16px] mt-[4px] flex items-center"><span class="text-[#9a9a9a]" data-w="16">Cc:</span><span class="ml-[9px]" data-w="260">Carl Benedict Lomiguen, Ma. Carmina Gamboa</span></div>
                <div class="h-[16px] flex items-center text-[12px] text-[#008000]"><span data-w="255">This message may be forwarded to Google recipient(s)</span></div>
              </div>
              <div class="pt-[33px] pr-[24px] flex flex-col items-end">
                <div class="h-[16px] flex items-center"><span data-w="117">05/06/2019 09:58 AM</span></div>
                <div class="h-[16px] mt-[9px] flex items-center text-[#4040f0] underline"><span data-w="72">Show Details</span></div>
              </div>
            </div>
            <div class="leading-[16px] [&>div]:h-[16px]">
              <div><span data-w="75">Thanks both.</span></div><div></div>
              <div><span data-w="560">I will get the Assu manager to have an initial check then we will provide feedback. Thanks again</span></div><div></div><div></div><div></div>
              <div class="font-['Liberation_Serif',Georgia,serif] text-[15px]"><span data-w="54">Regards,</span></div><div></div><div></div>
            </div>
            <div class="leading-[14px] [&>div]:h-[14px] [&>div]:font-['Liberation_Serif',Georgia,serif] text-[14px]">
              <div class="font-bold"><span data-w="137">Jimmy D. Disquetado</span></div>
              <div><span data-w="167">PwC | Director for Operations</span></div>
              <div><span data-w="352">Telephone: +63 (2)  534 7515 local 5001 | 63 917 825 2990</span></div>
              <div><span data-w="197">jimmy.d.disquetado@ph.pwc.com</span></div>
              <div><span data-w="355">PricewaterhouseCoopers Business Services Philippines Co. Ltd.</span></div>
              <div><span data-w="518">4/F, JMT Corporate Condominium Bldg., ADB Ave., Ortigas Center, Pasig City, Philippines</span></div>
            </div>
            <div class="h-[16px] leading-[16px] text-[12px] text-[#0000ee]"><span data-w="120">http://www.pwc.com/ph</span></div>
            <div class="ml-[-4px] mt-[26px] w-[856px] h-[21px] border border-[#b0b0d0] flex items-stretch">
              <div class="w-[215px] flex items-center border-r border-[#b0b0d0] pl-[7px]"><svg class="w-[9px] h-[6px]"><path d="m.5.500 4 4.500 4-4.500" fill="none" stroke="#ee7d10" stroke-width="1.600"/></svg><span class="ml-[12px]" data-w="138">Jay Armand B. Ogayon</span></div>
              <div class="grow bg-[#f0f0f0] flex items-center justify-between pl-[5px] pr-[5px] text-[#4a4a8c]"><span data-w="441">Hi Jimmy,  Sharing with you the above mentioned file as part of our team's...</span><span data-w="138">05/03/2019 08:53:02 PM</span></div>
            </div>
            <div class="mt-[19px] w-[870px] h-[76px] border-b border-[#7f90a8] grid grid-cols-[96px_auto] auto-rows-[15px] leading-[15px] text-[12px]">
              <span class="text-[#666]">From:</span><span><span data-w="204">Jay Armand B. Ogayon/PH/ABAS/PwC</span></span>
              <span class="text-[#666]">To:</span><span><span data-w="233">Jimmy D. Disquetado/PH/ABAS/PwC@Asia</span></span>
              <span class="text-[#666]">Cc:</span><span><span data-w="248">Carl Benedict Lomiguen/PH/ABAS/PwC@Asia</span></span>
              <span class="text-[#666]">Date:</span><span><span data-w="118">05/03/2019 08:53 PM</span></span>
              <span class="text-[#666]">Subject:</span><span><span data-w="301">Draft Invoice Generator RPA Process Design Document</span></span>
            </div>
            <div class="mt-[19px] leading-[16px] [&>div]:h-[16px]">
              <div><span data-w="58">Hi Jimmy,</span></div><div></div>
              <div><span data-w="830">Sharing with you the above mentioned file as part of our team's initiative to articulate the firm's strategic step to digitise its business operations.</span></div>
              <div><span data-w="695">[attachment "InvoiceGenerator_RPA-ProcessDesignDocument.pdf" deleted by Jimmy D. Disquetado/PH/ABAS/PwC]</span></div><div></div>
              <div><span data-w="484">Carl Lomiguen co-authored this document as our RPA Business Analyst in training.</span></div><div></div>
              <div><span data-w="55">Regards.</span></div>
            </div>
            <div class="mt-[13px] leading-[13px] [&>div]:h-[13px] text-[11px]">
              <div class="text-[12.5px] font-bold"><span data-w="128">Jay Armand B. Ogayon</span></div>
              <div><span data-w="72">PwC | Manager</span></div>
              <div><span data-w="185">Telephone: +63 (2) 534 7515 ext. 5004</span></div>
              <div><span data-w="197">Email: jay.armand.b.ogayon@ph.pwc.com</span></div>
              <div><span data-w="299">PricewaterhouseCoopers Business Services Philippines Co. Ltd.</span></div>
              <div><span data-w="389">4/F JMT Corporate Condominium, ADB Ave., Ortigas Center, Pasig City, Philippines</span></div>
            </div>
          </article>
        </div>
      </section>
      <div class="pt-[419px]"><div class="w-[5px] h-[72px] bg-[#7f90a4] flex items-center justify-end"><svg class="w-[3px] h-[6px]"><path d="M3 0v6L0 3z" fill="#fff"/></svg></div></div>
    </div>
    <div class="h-[4px] shrink-0 border-b border-[#7f8fae]"></div>
    <footer class="grow bg-[#e7eaf3] flex items-center text-[#2f568f]">
      <span class="w-[32px] h-full border-r border-[#9aa3b5]"></span>
      <svg class="w-[7px] h-[4px] ml-[1595px]"><path d="M0 4h7L3.500 0z" fill="#33527f"/></svg>
      <svg class="w-[20px] h-[12px] ml-[95px]" viewBox="0 0 20 12"><path d="M0 5h11v2h-7v2H2V7H0z" fill="#f3b13a" stroke="#b5761d" stroke-width=".6"/><circle cx="15" cy="6" r="4" fill="#f9c964" stroke="#b5761d"/></svg>
      <svg class="w-[18px] h-[12px] ml-[19px]" viewBox="0 0 18 12"><path d="m1 11 4-8h6l-3 8zM12 2h5v4h-5z" fill="#eef0f3" stroke="#a3a9b3"/></svg>
      <span class="ml-[17px]" data-w="37">Online</span>
      <svg class="w-[6px] h-[4px] ml-[4px]"><path d="M0 4h6L3 0z" fill="#33527f"/></svg>
    </footer>
  </main>

  <!-- Internet Explorer -->
  <section class="w-[1920px] h-full flex flex-col shrink-0 bg-white font-['Open_Sans','Segoe_UI',sans-serif] text-[11.5px]">
    <div class="h-[54px] shrink-0 bg-[#f9c31f] relative">
      <svg class="absolute right-[19px] top-[7px] w-[103px] h-[14px]" viewBox="0 0 103 14"><path d="M1 7.500h10M46.500 5h7v7.500h-7zM48.500 5V2.500h7V10h-2M92.500 2.500l10 10M102.500 2.500l-10 10" fill="none" stroke="#111" stroke-width="1.200"/></svg>
      <div class="flex items-end h-[52px] pb-[1px]">
        <svg class="w-[71px] h-[34px] shrink-0 mb-[-3px]" viewBox="0 0 71 34"><g stroke="#b5901f" fill="#fac928" stroke-width="1.200"><circle cx="19.500" cy="19" r="18.300"/><circle cx="55" cy="19" r="12.500"/></g><g fill="none" stroke="#b5901f" stroke-width="5.500"><path d="M30 19H12M20 10l-9 9 9 9"/><path d="M48 19h13M56 13l6 6-6 6" stroke-width="4.500"/></g><g fill="none" stroke="#fdebb5" stroke-width="3.500"><path d="M29.500 19H12M20 10.500 11.500 19l8.500 8.500"/><path d="M48.500 19H61M56 13.500l5.500 5.500-5.500 5.500" stroke-width="2.600"/></g></svg>
        <div class="w-[1279px] h-[24px] bg-[#fde8af] border border-[#b08a1e] flex items-center pl-[4px]">
          <svg class="w-[15px] h-[15px] mr-[5px]" viewBox="0 0 15 15"><path d="M1 0h9v15H1z" fill="#f0f0ec"/><path d="M0 0h4v14H0z" fill="#5aa5dc"/><path d="M6 3h8v12H6z" fill="#eceae2"/><path d="M7 6h5M7 9h6M7 12h6" stroke="#9bb"/></svg>
          <span data-w="130" class="text-[#75705f]">https://ipowerph.eps.ad.</span><span data-w="88">pwcinternal.com</span><span data-w="335" class="text-[#75705f]">/#/modules/legacy/open?url=gui%2Fiportfolio%2Fdefault.aspx</span>
          <div class="grow"></div>
          <svg class="w-[7px] h-[4px]"><path d="M0 0h7L3.500 4z" fill="#8c7d52"/></svg><svg class="w-[10px] h-[10px] ml-[8px] mr-[6px]"><path d="m1 1 8 8M9 1 1 9" stroke="#857a58" stroke-width="2.200"/></svg>
        </div>
        <div class="ml-[6px] w-[478px] h-[24px] bg-[#fde8af] border border-[#b08a1e] flex items-center pl-[7px]">
          <span data-w="44">Search...</span><div class="grow"></div>
          <svg class="w-[14px] h-[14px]" viewBox="0 0 14 14"><circle cx="8.500" cy="5.500" r="4.200" fill="none" stroke="#857a58" stroke-width="2"/><path d="m5.500 8.500-5 5" stroke="#857a58" stroke-width="2.400"/></svg><svg class="w-[7px] h-[4px] ml-[6px] mr-[9px]"><path d="M0 0h7L3.500 4z" fill="#8c7d52"/></svg>
        </div>
        <svg class="ml-[12px] mb-[4px] w-[68px] h-[17px]" viewBox="0 0 68 17"><g fill="#fff" stroke="#a88520" stroke-width=".9"><path d="M1 9 8.500 1 11 3.500V1.500h2v4L16 9l-1 1h-1.500v6h-3v-5H7v5H3.500v-6H2z"/><path d="m33.500 1 2.300 5 5.700.5-4.200 3.800 1.200 5.700-5-3-5 3 1.200-5.700-4.200-3.800 5.700-.5z"/><path d="m56 .8h3l.5 2 1.500.6L63 2.300l2 2-1.200 1.900.6 1.500 2.100.5v2.800l-2.100.5-.6 1.500L65 14.800l-2 2-1.900-1.200-1.600.6h-3.500l-1.600-.6-1.900 1.200-2-2 1.200-1.800-.6-1.500-2.100-.5V8.200l2.100-.5.6-1.500-1.200-1.900 2-2 1.900 1.100 1.600-.6z"/><circle cx="57.700" cy="9.300" r="3.300" fill="#f9c31f"/></g></svg>
      </div>
    </div>
    <div class="h-[24px] shrink-0 bg-linear-to-b from-[#f9c31f] from-15% to-[#ebc65c] border-b border-[#f9c31f] flex">
      <div class="w-[199px] bg-white border border-b-0 border-[#b08a1e] flex items-center pl-[7px]"><svg class="w-[12px] h-[12px]" viewBox="0 0 12 12"><circle cx="6" cy="6" r="4.600" fill="none" stroke="#999" stroke-width="2.200"/><path d="M6 1.400A4.600 4.600 0 0 0 1.400 6" fill="none" stroke="#ddd" stroke-width="2.200"/></svg><span class="ml-[6px]" data-w="37">iPower</span><div class="grow"></div><svg class="w-[9px] h-[9px] mr-[5px]"><path d="m1 1 7 7M8 1 1 8" stroke="#999" stroke-width="2"/></svg></div>
      <div class="w-[23px] bg-[#dcc27a] border border-l-0 border-b-0 border-[#b08a1e] flex items-center justify-center"><svg class="w-[14px] h-[16px]"><use href="#spark"/></svg></div>
    </div>
    <div class="grow bg-white"></div>
    <div class="h-[40px] shrink-0 bg-[#645323] flex text-white pr-[8px]">
      <div class="w-[48px] flex items-center justify-center"><svg class="w-[17px] h-[16px]"><use href="#win"/></svg></div>
      <div class="w-[51px] flex items-center justify-center"><svg class="w-[17px] h-[17px]"><use href="#find"/></svg></div>
      <div id="bottomApps" class="flex"></div>
      <div class="grow"></div>
      <div class="pt-[1px]"><div class="h-[18px] flex items-center justify-center"><span data-w="48">12:04 PM</span></div><div class="h-[18px] flex items-center justify-center"><span data-w="46">5/6/2019</span></div></div>
    </div>
  </section>
</div>

<script>
const $ = id => document.getElementById(id);
const svg = (name, w, h, extra = '') => `<svg class="shrink-0 ${extra}" width="${w}" height="${h}"><use href="#${name}"/></svg>`;

// taskbar apps: icon, width, height, state (0 idle, 1 running, 2 active)
const apps = [['snip',22,22,0],['explorer',22,20,1],['ui',24,24,0],['ie',24,24,2],['excel',22,21,1],['notepad',22,22,1],['whats',26,26,1],['chrome1',25,25,1],['viber',26,26,1],['notes',23,22,1],['chrome2',26,26,1],['ui',24,24,1],['sticky',18,18,1],['word',22,21,1],['uiw',24,24,1]];
$('sideApps').innerHTML = apps.map(([n,w,h,s]) => `<div class="h-[47px] w-[62px] flex items-center ${s === 2 ? 'bg-[#9a7b25]' : ''}"><span class="w-[2px] ${s === 2 ? 'h-[47px] bg-[#ffe8a6]' : s ? 'h-[38px] bg-[#ffe8a6]' : ''}"></span><span class="w-[58px] flex justify-center">${svg(n,w,h)}</span></div>`).join('');
$('bottomApps').innerHTML = apps.map(([n,w,h,s]) => `<div class="w-[49px] h-[40px] flex flex-col items-center ${s === 2 ? 'bg-[#9a7b25]' : ''}"><span class="h-[38px] flex items-center">${svg(n,w,h)}</span><span class="h-[2px] ${s === 2 ? 'w-[49px] bg-[#ffe8a6]' : s ? 'w-[40px] bg-[#ffe8a6]' : ''}"></span></div>`).join('');

// left icon strip
const strip = [['bino',26],['-',5],['maildoc',22],['cal',22],['book',22],['todo',22],['sync',22],['foldmark',22,1],['tree',22,1],['foldgray',22,1],['folddisk',22,1],['foldglobe',22,2],['-',14],['desk',18],['globe',25],['-',6],['infod',24],['house',21]];
$('strip').innerHTML = strip.map(([n,h,a]) => n === '-' ? `<div class="flex items-center" style="height:${h}px"><div class="h-px w-[20px] bg-[#c9cfe4]"></div></div>` : `<div class="flex items-center gap-[3px]" style="height:${h}px">${svg(n,16,16)}${a ? `<svg width="4" height="7"><path d="M0 0v7l4-3.500z" fill="${a === 2 ? '#000' : '#cfd3ea'}"/></svg>` : ''}</div>`).join('');

// folder tree
const folders = [['inbox','Inbox (4566)',76],['draft','Drafts',33],['sent','Sent',26],['flag','Follow Up',57],['alldoc','All Documents',84],['junk','Junk',27],['trash','Trash',31],['views','Views',34]];
const groups = [['nfold','Folders',42],['narch','Archive',41],['ntool','Tools',29],['nother','Other Mail',59]];
$('folders').innerHTML = folders.map(([n,t,w],i) => `<div class="h-[22px] flex items-center pl-[9px] ${i ? '' : 'bg-[#c8c8c8] font-bold'}">${svg(n,18,18,'mr-[3px]')}<span data-w="${w}">${t}</span></div>`).join('')
  + '<div class="mt-[4px]"></div>'
  + groups.map(([n,t,w]) => `<div class="h-[32px] border-t border-[#a3bbd6]"><div class="h-[31px] border-t border-white flex items-center pl-[9px] pt-[2px]">${svg(n,18,18,'mr-[3px]')}<span data-w="${w}">${t}</span></div></div>`).join('')
  + '<div class="h-[2px] border-t border-[#a3bbd6] bg-white"></div>';

// action bar: icon, label, label width, arrow, cell width
const acts = [['new','New',25,1,63],['reply','Reply',33,1,71],['replyall','Reply to All',66,1,104],['fwd','Forward',46,1,84],['folder','',0,1,36],['flag','',0,1,37],['trash','',0,0,24],['addb','',0,1,36],['','More',29,1,48],['redo','',0,0,25],['bubble','',0,1,33]];
const tri = '<svg class="shrink-0 ml-auto mr-[2px]" width="7" height="4"><path d="M0 0h7L3.500 4z" fill="#2f4f82"/></svg>';
$('actions').innerHTML = acts.map(([n,t,w,a,cw]) => `<div class="h-[28px] shrink-0 flex items-center border-r border-[#b9c3d3] pl-[4px]" style="width:${cw}px">${n ? svg(n,16,17,'mr-[3px]') : ''}${t ? `<span data-w="${w}">${t}</span>` : ''}${a ? tri : ''}</div>`).join('')
  + `<div class="grow"></div><div class="h-[28px] w-[70px] border-l border-[#7f90a8] flex items-center pl-[3px]">${svg('show',15,16,'mr-[3px]')}<span data-w="32">Show</span>${tri}</div>`;

// messages: icon, sender, width, date, time, subject, width, unread, markers
const am = 'Ashlee Therese Mayores', fa = ['Flexible Benefits Reimbursement Approval for Ogayon , Jay Armand',433], ff = ['Flexible Benefits Reimbursement For Approval for Ogayon , Jay Armand',459];
const mails = [
 ['i','Carl Angelo Cabusas',132,'','11:14 AM','Information Update - Description has changed: Briefing - PwC Discovery',453,1,''],
 ['star','Treesha Ann Pascual',132,'','11:02 AM','Missing timesheet memo for April 30, 2019 cut off period.xlsx',383,1,'c'],
 ['star','Glaiza Rose Fodulla',127,'','10:57 AM','Staff Whereabouts - May 6, 2019',200,1,''],
 ['star','Jimmy D. Disquetado',134,'','9:58 AM','Re: Draft Invoice Generator RPA Process Design Document',371,1,'s'],
 ['star','BSP Finance',81,'','7:49 AM','Deadlines for 30 April 2019 Cut-off',212,1,''],
 ['earth','Ashley Graizevsky',114,'May 3','9:07 PM','Blockchain - what does it mean for Shared Services?',304,0,''],
 ['star','Ma. Grace Gutierrez',127,'May 3','7:25 PM','Events - May 6 to 10,2019',155,1,''],
 ['','Ricardo Quimpe Jr.',121,'May 3','7:21 PM',"Re: Chinatown's venue concern",179,0,'cg'],
 ['star','Snapshot.PH@ph.pwc.com',169,'May 3','7:19 PM','New Snapshot to complete for Macris N Jeresano',310,1,''],
 ['star','Ricardo Quimpe Jr.',121,'May 3','7:16 PM',"Chinatown's venue concern",174,1,'c'],
 ['','NIS-AppSec Svcs-POP',139,'May 3','6:59 PM','SD-22391 Knime Analytics Platform - SRT',243,0,'b'],
 ['star','PH GTS Operations Team',160,'May 3','6:40 PM','Gentle Reminder:  GTS Advisory - Planned Downtime of POPS, TITOS, e',457,1,''],
 ['accept','Carl Angelo Cabusas',132,'May 3','5:49 PM','Briefing - PwC Discovery Sessions',199,0,''],
 ['star',am,155,'May 3','5:36 PM',...fa,1,''],['star',am,155,'May 3','5:36 PM',...ff,1,''],['star',am,155,'May 3','5:34 PM',...fa,1,''],['star',am,155,'May 3','5:33 PM',...ff,1,''],['star',am,155,'May 3','5:31 PM',...fa,1,''],['star',am,155,'May 3','5:31 PM','',0,1,'']];
$('mails').innerHTML = mails.map(([ic,from,fw,d,t,sub,sw,u,m]) => `<div class="h-[46px] w-[498px] flex border-b border-[#abbdd0] ${m === 's' ? 'outline outline-black -outline-offset-1' : ''}">
  <div class="w-[19px] shrink-0 bg-[#f1f2f7] pt-[4px] pl-[2px]">${ic ? svg(ic,12,12) : ''}</div>
  <div class="w-[479px] overflow-hidden ${u ? 'font-bold' : 'text-[#4d4d4d]'}">
    <div class="h-[23px] flex items-center pl-[34px] pr-[3px]"><b data-w="${fw}">${from}</b><span class="grow"></span>${d ? `<span class="mr-[20px]" data-w="37">${d}</span>` : ''}<span data-w="${t.length > 7 ? 55 : 49}">${t}</span></div>
    <div class="h-[23px] flex items-center"><span class="w-[21px] shrink-0 flex justify-center pr-[6px]">${m === 's' ? '<svg width="6" height="10"><path d="M0 0v10l6-5z" fill="#2f5a98"/></svg>' : ''}</span><span data-w="${sw}">${sub}</span><span class="grow"></span>${m.includes('c') ? svg('clip',12,12,'mb-[5px] mr-[4px]') : ''}${m.includes('g') ? svg('gleft',11,11,'mb-[5px] mr-[6px]') : m.includes('b') ? svg('bright',11,11,'mb-[5px] mr-[6px]') : m === 'c' ? '<span class="w-[17px]"></span>' : ''}</div>
  </div></div>`).join('');

// spread each label's letters over its measured width
function fit() {
  const els = [...document.querySelectorAll('[data-w]')];
  els.forEach(el => { el.style.letterSpacing = '0px'; });
  const widths = els.map(el => el.getBoundingClientRect().width);
  els.forEach((el, k) => {
    const n = el.textContent.length, w = +el.dataset.w;
    if (n && w) el.style.letterSpacing = ((w - widths[k]) / n).toFixed(3) + 'px';
  });
}
fit();
addEventListener('load', fit);
document.fonts.ready.then(fit);
new ResizeObserver(fit).observe(document.body);
[30, 120, 300].forEach(ms => setTimeout(fit, ms));
</script>
</body>
</html>
